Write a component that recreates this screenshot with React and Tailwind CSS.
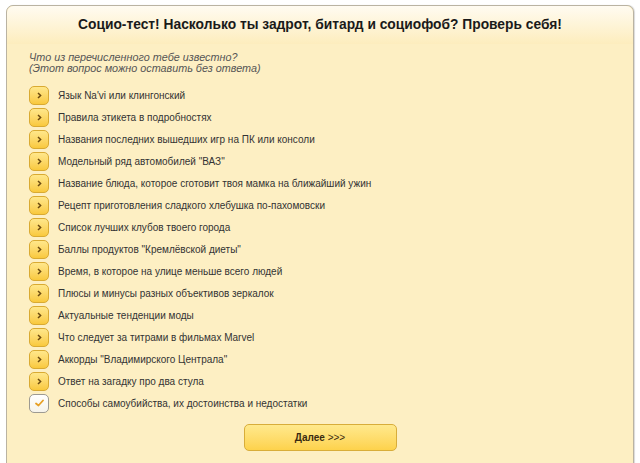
import React from 'react';

const ITEMS = [
  'Язык Na\'vi или клингонский',
  'Правила этикета в подробностях',
  'Названия последних вышедших игр на ПК или консоли',
  'Модельный ряд автомобилей "ВАЗ"',
  'Название блюда, которое сготовит твоя мамка на ближайший ужин',
  'Рецепт приготовления сладкого хлебушка по-пахомовски',
  'Список лучших клубов твоего города',
  'Баллы продуктов "Кремлёвской диеты"',
  'Время, в которое на улице меньше всего людей',
  'Плюсы и минусы разных объективов зеркалок',
  'Актуальные тенденции моды',
  'Что следует за титрами в фильмах Marvel',
  'Аккорды "Владимирского Централа"',
  'Ответ на загадку про два стула',
  'Способы самоубийства, их достоинства и недостатки',
];

function Box({ checked }) {
  if (checked) {
    return (
      <div className="w-[20px] h-[19px] shrink-0 rounded-[5px] border border-[#9d9a92] bg-gradient-to-b from-white to-[#f6f3ea] flex items-center justify-center">
        <svg width="9" height="8" viewBox="0 0 9 8">
          <path d="M1 4.5 L3.5 6.5 L8 1.5" fill="none" stroke="#e7a026" strokeWidth="1.8" strokeLinecap="round" strokeLinejoin="round" />
        </svg>
      </div>
    );
  }
  return (
    <div className="w-[20px] h-[19px] shrink-0 rounded-[5px] border border-[#d9aa32] bg-gradient-to-b from-[#ffe78a] to-[#f9c93c] flex items-center justify-center">
      <svg width="5" height="7" viewBox="0 0 5 7">
        <path d="M1 1 L3.6 3.5 L1 6" fill="none" stroke="#6b4a10" strokeWidth="1.5" />
      </svg>
    </div>
  );
}

export default function App() {
  return (
    <div className="w-[640px] h-[463px] overflow-hidden bg-white pt-[5px] px-[6px]" style={{ fontFamily: '"Liberation Sans", Arial, sans-serif' }}>
      <div className="h-[500px] rounded-[7px] border border-[#bab3a2] bg-[#fdefc3] shadow-[1px_0_1px_rgba(0,0,0,0.15)]">
        <div className="h-[38px] rounded-t-[7px] bg-gradient-to-b from-[#fffbf1] to-[#fdedbd] flex items-center justify-center text-[13.8px] font-bold text-[#1a1a1a]">
          Социо-тест! Насколько ты задрот, битард и социофоб? Проверь себя!
        </div>
        <div className="px-[22px] pt-[8px]">
          <div className="text-[10.8px] leading-[11px] italic text-[#555]">
            <div>Что из перечисленного тебе известно?</div>
            <div>(Этот вопрос можно оставить без ответа)</div>
          </div>
          <div className="mt-[10px] flex flex-col">
            {ITEMS.map((t, i) => (
              <div key={i} className="h-[22px] flex items-center gap-[9px]">
                <Box checked={i === ITEMS.length - 1} />
                <span className="text-[10px] text-[#333]">{t}</span>
              </div>
            ))}
          </div>
          <div className="mt-[10px] flex justify-center">
            <div className="w-[153px] h-[27px] rounded-[5px] border border-[#d8ad3a] bg-gradient-to-b from-[#ffe98c] to-[#fdd24b] flex items-center justify-center text-[10px] text-[#3a2a10]">
              <span className="font-bold">Далее</span>&nbsp;&gt;&gt;&gt;
            </div>
          </div>
        </div>
      </div>
    </div>
  );
}
